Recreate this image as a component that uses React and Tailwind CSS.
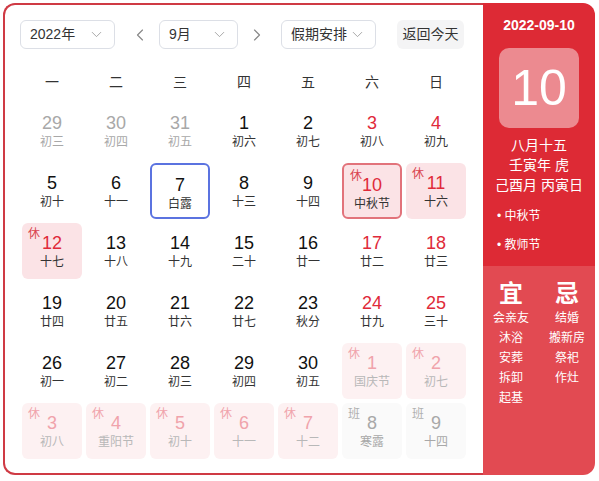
import React from 'react'
import { ChevronDown, ChevronLeft, ChevronRight } from 'lucide-react'

const weekdays = ['一', '二', '三', '四', '五', '六', '日']

// kind: prev | normal | weekend | rest | today | selected | nextRest | nextWork
const days = [
    { d: 29, l: '初三', kind: 'prev' },
    { d: 30, l: '初四', kind: 'prev' },
    { d: 31, l: '初五', kind: 'prev' },
    { d: 1, l: '初六', kind: 'normal' },
    { d: 2, l: '初七', kind: 'normal' },
    { d: 3, l: '初八', kind: 'weekend' },
    { d: 4, l: '初九', kind: 'weekend' },
    { d: 5, l: '初十', kind: 'normal' },
    { d: 6, l: '十一', kind: 'normal' },
    { d: 7, l: '白露', kind: 'selected' },
    { d: 8, l: '十三', kind: 'normal' },
    { d: 9, l: '十四', kind: 'normal' },
    { d: 10, l: '中秋节', kind: 'today' },
    { d: 11, l: '十六', kind: 'rest' },
    { d: 12, l: '十七', kind: 'rest' },
    { d: 13, l: '十八', kind: 'normal' },
    { d: 14, l: '十九', kind: 'normal' },
    { d: 15, l: '二十', kind: 'normal' },
    { d: 16, l: '廿一', kind: 'normal' },
    { d: 17, l: '廿二', kind: 'weekend' },
    { d: 18, l: '廿三', kind: 'weekend' },
    { d: 19, l: '廿四', kind: 'normal' },
    { d: 20, l: '廿五', kind: 'normal' },
    { d: 21, l: '廿六', kind: 'normal' },
    { d: 22, l: '廿七', kind: 'normal' },
    { d: 23, l: '秋分', kind: 'normal' },
    { d: 24, l: '廿九', kind: 'weekend' },
    { d: 25, l: '三十', kind: 'weekend' },
    { d: 26, l: '初一', kind: 'normal' },
    { d: 27, l: '初二', kind: 'normal' },
    { d: 28, l: '初三', kind: 'normal' },
    { d: 29, l: '初四', kind: 'normal' },
    { d: 30, l: '初五', kind: 'normal' },
    { d: 1, l: '国庆节', kind: 'nextRest' },
    { d: 2, l: '初七', kind: 'nextRest' },
    { d: 3, l: '初八', kind: 'nextRest' },
    { d: 4, l: '重阳节', kind: 'nextRest' },
    { d: 5, l: '初十', kind: 'nextRest' },
    { d: 6, l: '十一', kind: 'nextRest' },
    { d: 7, l: '十二', kind: 'nextRest' },
    { d: 8, l: '寒露', kind: 'nextWork' },
    { d: 9, l: '十四', kind: 'nextWork' },
]

const styles = {
    prev: { box: '', num: 'text-[#a8a8a8]', lunar: 'text-[#a8a8a8]' },
    normal: { box: '', num: 'text-[#111]', lunar: 'text-[#333]' },
    weekend: { box: '', num: 'text-[#e02a3a]', lunar: 'text-[#333]' },
    rest: { box: 'bg-[#fbe3e6]', num: 'text-[#e02a3a]', lunar: 'text-[#333]', tag: '休', tagColor: 'text-[#d9434e]' },
    today: { box: 'bg-[#fbe3e6] border-2 border-[#e2737b]', num: 'text-[#e02a3a]', lunar: 'text-[#333]', tag: '休', tagColor: 'text-[#d9434e]' },
    selected: { box: 'border-2 border-[#5b73e0]', num: 'text-[#111]', lunar: 'text-[#333]' },
    nextRest: { box: 'bg-[#fdf1f2]', num: 'text-[#f0a3ab]', lunar: 'text-[#b8b8b8]', tag: '休', tagColor: 'text-[#f0a3ab]' },
    nextWork: { box: 'bg-[#fafafa]', num: 'text-[#a8a8a8]', lunar: 'text-[#a8a8a8]', tag: '班', tagColor: 'text-[#b0b0b0]' },
}

function Select({ label, width }) {
    return (
        <div className={`${width} h-[29px] flex items-center justify-between pl-[9px] pr-[9px] border border-[#dcdfe6] rounded-[6px] text-[14px] text-[#333]`}>
            <span>{label}</span>
            <ChevronDown size={17} strokeWidth={1.2} className="text-[#999]" />
        </div>
    )
}

function DayCell({ d, l, kind }) {
    const s = styles[kind]
    return (
        <div className={`relative m-[2px] h-[56px] rounded-[6px] flex flex-col items-center ${s.box}`}>
            {s.tag && (
                <span className={`absolute left-[6px] top-[3px] text-[12px] leading-[16px] ${s.tagColor}`}>{s.tag}</span>
            )}
            <span className={`mt-[9px] text-[18px] leading-[22px] ${s.num}`}>{d}</span>
            <span className={`text-[12px] leading-[16px] ${s.lunar}`}>{l}</span>
        </div>
    )
}

export default function App() {
    return (
        <div className="pl-[3px] pt-[3px] bg-white" style={{ fontFamily: '"Liberation Sans", "Noto Sans CJK SC", sans-serif' }}>
            <div className="flex w-[592px] h-[472px]">
                <div className="w-[480px] border-2 border-r-0 border-[#cf3a44] rounded-l-[12px] pl-[15px] pt-[15px] bg-white">
                    <div className="flex items-center">
                        <Select label="2022年" width="w-[95px]" />
                        <button className="ml-[15px] w-[20px] flex justify-center text-[#888]">
                            <ChevronLeft size={20} strokeWidth={1.4} />
                        </button>
                        <div className="ml-[9px]">
                            <Select label="9月" width="w-[79px]" />
                        </div>
                        <button className="ml-[9px] w-[20px] flex justify-center text-[#888]">
                            <ChevronRight size={20} strokeWidth={1.4} />
                        </button>
                        <div className="ml-[14px]">
                            <Select label="假期安排" width="w-[95px]" />
                        </div>
                        <button className="ml-[21px] w-[67px] h-[29px] rounded-[6px] bg-[#f4f4f5] text-[14px] text-[#333]">
                            返回今天
                        </button>
                    </div>

                    <div className="mt-[15px] grid grid-cols-[repeat(7,64px)] h-[37px] items-center">
                        {weekdays.map((w) => (
                            <span key={w} className="text-center text-[14px] text-[#333]">{w}</span>
                        ))}
                    </div>

                    <div className="grid grid-cols-[repeat(7,64px)]">
                        {days.map((day, i) => (
                            <DayCell key={i} {...day} />
                        ))}
                    </div>
                </div>

                <div className="w-[112px] rounded-r-[12px] overflow-hidden flex flex-col text-white">
                    <div className="bg-[#dd2a35] h-[263px] flex flex-col items-center pt-[13px]">
                        <div className="text-[14px] leading-[18px] font-semibold">2022-09-10</div>
                        <div className="mt-[14px] w-[80px] h-[80px] rounded-[10px] bg-white/45 flex items-center justify-center text-[50px]">
                            10
                        </div>
                        <div className="mt-[7px] text-[14px] leading-[20px]">八月十五</div>
                        <div className="text-[14px] leading-[20px]">壬寅年 虎</div>
                        <div className="text-[14px] leading-[20px]">己酉月 丙寅日</div>
                        <div className="self-start pl-[14px] mt-[11px] flex flex-col gap-[9px] text-[12px] leading-[20px]">
                            <span>• 中秋节</span>
                            <span>• 教师节</span>
                        </div>
                    </div>
                    <div className="flex-1 bg-[#e24a52] grid grid-cols-2 pt-[14px]">
                        <div className="flex flex-col items-center">
                            <span className="text-[24px] leading-[28px] font-semibold">宜</span>
                            {['会亲友', '沐浴', '安葬', '拆卸', '起基'].map((t) => (
                                <span key={t} className="text-[12px] leading-[20px]">{t}</span>
                            ))}
                        </div>
                        <div className="flex flex-col items-center">
                            <span className="text-[24px] leading-[28px] font-semibold">忌</span>
                            {['结婚', '搬新房', '祭祀', '作灶'].map((t) => (
                                <span key={t} className="text-[12px] leading-[20px]">{t}</span>
                            ))}
                        </div>
                    </div>
                </div>
            </div>
        </div>
    )
}
